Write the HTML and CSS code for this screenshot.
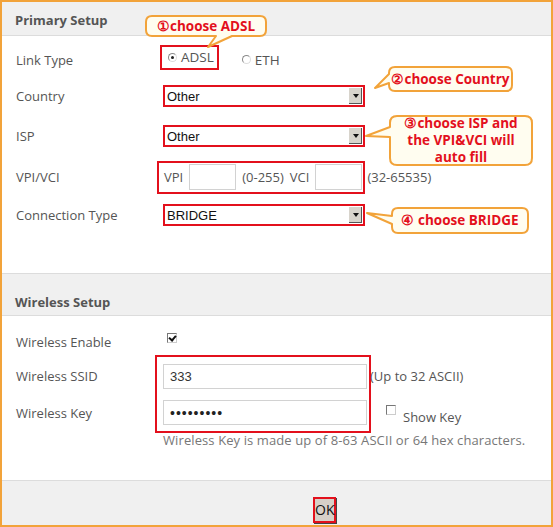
FILE: index.html
```html
<!DOCTYPE html>
<html lang="en">
<head>
    <meta charset="UTF-8">
    <meta name="viewport" content="width=device-width, initial-scale=1.0">
    <title>Quick Setup</title>
    <link rel="stylesheet" href="styles.css">
</head>
<body>
    <div class="page">
        <section class="section">
            <h2 class="section-title">Primary Setup</h2>
            <div class="section-body primary-body">
                <div class="form-row row-link">
                    <span class="row-label">Link Type</span>
                    <label class="radio-item mark-box"><span class="radio checked"></span>ADSL</label>
                    <label class="radio-item radio-eth"><span class="radio"></span>ETH</label>
                </div>
                <div class="form-row row-country">
                    <span class="row-label">Country</span>
                    <span class="select-wrap"><select class="select"><option>Other</option></select></span>
                </div>
                <div class="form-row row-isp">
                    <span class="row-label">ISP</span>
                    <span class="select-wrap"><select class="select"><option>Other</option></select></span>
                </div>
                <div class="form-row row-vpi">
                    <span class="row-label">VPI/VCI</span>
                    <span class="vpi-group mark-box">
                        <span>VPI</span>
                        <input class="text-input small-input" type="text">
                        <span>(0-255)</span>
                        <span>VCI</span>
                        <input class="text-input small-input" type="text">
                    </span>
                    <span class="hint vci-hint">(32-65535)</span>
                </div>
                <div class="form-row row-conn">
                    <span class="row-label">Connection Type</span>
                    <span class="select-wrap"><select class="select"><option>BRIDGE</option></select></span>
                </div>
            </div>
        </section>

        <section class="section">
            <h2 class="section-title wireless-title">Wireless Setup</h2>
            <div class="section-body wireless-body">
                <div class="form-row row-enable">
                    <span class="row-label">Wireless Enable</span>
                    <span class="checkbox checked"></span>
                </div>
                <div class="form-row row-ssid">
                    <span class="row-label">Wireless SSID</span>
                    <input class="text-input wide-input" type="text" value="333">
                    <span class="hint ssid-hint">(Up to 32 ASCII)</span>
                </div>
                <div class="form-row row-key">
                    <span class="row-label">Wireless Key</span>
                    <input class="text-input wide-input key-input" type="password" value="12345678a">
                    <span class="checkbox show-key-box"></span>
                    <span class="hint show-key">Show Key</span>
                </div>
                <div class="form-row row-help">
                    <span class="row-label"></span>
                    <span class="help-text">Wireless Key is made up of 8-63 ASCII or 64 hex characters.</span>
                </div>
                <div class="mark-box wifi-mark"></div>
            </div>
        </section>

        <footer class="page-footer">
            <button class="ok-btn" type="button">OK</button>
        </footer>

        <!-- annotation bubbles -->
        <div class="callout callout-1">
            <svg class="callout-shape" width="122" height="22" viewBox="0 0 122 22">
                <path d="M7 1 H115 Q121 1 121 7 V15 Q121 21 115 21 H87 L63 32 L71 21 H7 Q1 21 1 15 V7 Q1 1 7 1 Z"/>
            </svg>
            <span class="callout-text">①choose ADSL</span>
        </div>
        <div class="callout callout-2">
            <svg class="callout-shape" width="125" height="26" viewBox="0 0 125 26">
                <path d="M7 1 H118 Q124 1 124 7 V19 Q124 25 118 25 H7 Q1 25 1 19 V17 L-13 22 L1 8 V7 Q1 1 7 1 Z"/>
            </svg>
            <span class="callout-text">②choose Country</span>
        </div>
        <div class="callout callout-3">
            <svg class="callout-shape" width="144" height="51" viewBox="0 0 144 51">
                <path d="M8 1 H136 Q143 1 143 8 V43 Q143 50 136 50 H8 Q1 50 1 43 V22 L-23 21 L1 12 V8 Q1 1 8 1 Z"/>
            </svg>
            <span class="callout-text">③choose ISP and<br>the VPI&amp;VCI will<br>auto fill</span>
        </div>
        <div class="callout callout-4">
            <svg class="callout-shape" width="138" height="27" viewBox="0 0 138 27">
                <path d="M7 1 H131 Q137 1 137 7 V20 Q137 26 131 26 H7 Q1 26 1 20 V17 L-24 6 L1 9 V7 Q1 1 7 1 Z"/>
            </svg>
            <span class="callout-text">④ choose BRIDGE</span>
        </div>
    </div>
</body>
</html>
```

FILE: styles.css
```css
* {
    margin: 0;
    padding: 0;
    box-sizing: border-box;
}

body {
    font-family: 'Open Sans', 'Noto Sans', sans-serif;
    font-size: 13px;
    color: #555;
    background: #fff;
}

.page {
    position: relative;
    width: 553px;
    height: 527px;
    border: 2px solid #f2a33a;
    background: #fff;
    display: flex;
    flex-direction: column;
}

.section-title {
    height: 34px;
    padding: 0 13px;
    background: #f0f0f0;
    border-bottom: 1px solid #dcdcdc;
    font-size: 13px;
    font-weight: 700;
    color: #555;
    line-height: 37px;
}

.wireless-title {
    height: 43px;
    line-height: 56px;
    border-top: 1px solid #dcdcdc;
}

.primary-body {
    padding: 8px 0 0;
    height: 237px;
}

.wireless-body {
    position: relative;
    padding: 9px 0 0;
    height: 164px;
}

.form-row {
    display: flex;
    align-items: center;
    padding-left: 14px;
}

.row-label {
    width: 147px;
    flex-shrink: 0;
}

.row-link { height: 32px; }
.row-country { height: 40px; }
.row-isp { height: 40px; }
.row-vpi { height: 42px; }
.row-conn { height: 33px; }

.row-enable { height: 34px; }
.row-ssid { height: 34px; }
.row-key { height: 39px; }
.row-help { height: 16px; }

.mark-box {
    border: 2px solid #e3101c;
}

/* radios */
.radio-item {
    display: flex;
    align-items: center;
    gap: 4px;
    height: 25px;
    margin-top: -6px;
    font-size: 13.5px;
}

.radio-item.mark-box {
    margin-left: -3px;
    padding: 0 3px 0 6px;
}

.radio-eth {
    margin-left: 23px;
    margin-top: -1px;
}

.radio {
    width: 9px;
    height: 9px;
    border-radius: 50%;
    border: 1px solid;
    border-color: #8a8a8a #dcdcdc #dcdcdc #8a8a8a;
    background: #fff;
    position: relative;
}

.radio.checked::after {
    content: '';
    position: absolute;
    left: 2px;
    top: 2px;
    width: 3px;
    height: 3px;
    border-radius: 50%;
    background: #222;
}

/* selects */
.select-wrap {
    position: relative;
    display: block;
    width: 202px;
    height: 22px;
    border: 2px solid #e3101c;
    background: #fff;
}

.select {
    appearance: none;
    -webkit-appearance: none;
    width: 100%;
    height: 100%;
    border: none;
    outline: none;
    background: transparent;
    padding-left: 2px;
    font-family: 'Liberation Sans', Arial, sans-serif;
    font-size: 13px;
    color: #111;
}

.select-wrap::before {
    content: '';
    position: absolute;
    right: 1px;
    top: 1px;
    width: 12px;
    height: 15px;
    background: #d8d4cc;
    border-right: 1px solid #555;
    border-bottom: 1px solid #555;
    pointer-events: none;
}

.select-wrap::after {
    content: '';
    position: absolute;
    right: 4px;
    top: 7px;
    border-left: 3px solid transparent;
    border-right: 3px solid transparent;
    border-top: 4px solid #111;
    pointer-events: none;
}

/* vpi / vci */
.vpi-group {
    display: flex;
    align-items: center;
    gap: 6px;
    height: 33px;
    margin-left: -6px;
    padding: 0 1px 0 5px;
}

.text-input {
    height: 26px;
    border: 1px solid #d2d2d2;
    background: #fff;
    outline: none;
    font-family: 'Liberation Sans', Arial, sans-serif;
    font-size: 13px;
    color: #333;
    padding: 0 6px;
}

.small-input {
    width: 47px;
}

.wide-input {
    width: 204px;
    height: 25px;
}

.key-input {
    font-size: 14px;
    letter-spacing: 1px;
    color: #222;
}

.hint {
    color: #555;
}

.vci-hint {
    margin-left: 2px;
}

.ssid-hint {
    margin-left: 3px;
}

/* checkboxes */
.checkbox {
    width: 10px;
    height: 10px;
    border: 1px solid;
    border-color: #777 #ccc #ccc #777;
    background: #fff;
    position: relative;
    margin-left: 4px;
}

.checkbox.checked::after {
    content: '';
    position: absolute;
    left: 2px;
    top: 0;
    width: 3px;
    height: 5px;
    border-right: 2px solid #111;
    border-bottom: 2px solid #111;
    transform: rotate(40deg);
}

.row-enable .checkbox {
    margin-bottom: 8px;
}

.show-key-box {
    margin-left: 19px;
    margin-bottom: 6px;
}

.show-key {
    margin-left: 7px;
    margin-top: 8px;
}

.help-text {
    color: #777;
    letter-spacing: 0.1px;
}

.wifi-mark {
    position: absolute;
    left: 153px;
    top: 39px;
    width: 216px;
    height: 78px;
    pointer-events: none;
}

/* footer */
.page-footer {
    flex: 1;
    background: #f0f0f0;
    border-top: 1px solid #dcdcdc;
    padding: 16px 0 0 311px;
}

.ok-btn {
    width: 23px;
    height: 26px;
    border: 2px solid #e3101c;
    background: #d6d0c8;
    box-shadow: 1px 1px 0 #444;
    font-family: 'Open Sans', 'Noto Sans', sans-serif;
    font-size: 14px;
    color: #111;
    line-height: 20px;
    padding: 0;
}

/* callouts */
.callout {
    position: absolute;
    text-align: center;
}

.callout-shape {
    position: absolute;
    left: 0;
    top: 0;
    overflow: visible;
}

.callout-shape path {
    fill: #fffdf0;
    stroke: #f2a33a;
    stroke-width: 2;
    stroke-linejoin: round;
}

.callout-text {
    position: relative;
    display: block;
    font-weight: 700;
    font-size: 13.5px;
    color: #e3101c;
    white-space: nowrap;
}

.callout-1 {
    left: 143px;
    top: 13px;
    width: 122px;
    height: 22px;
    line-height: 22px;
}

.callout-2 {
    left: 386px;
    top: 64px;
    width: 125px;
    height: 26px;
    line-height: 26px;
}

.callout-3 {
    left: 387px;
    top: 113px;
    width: 144px;
    height: 51px;
    line-height: 17px;
}

.callout-4 {
    left: 389px;
    top: 205px;
    width: 138px;
    height: 27px;
    line-height: 27px;
}
```
